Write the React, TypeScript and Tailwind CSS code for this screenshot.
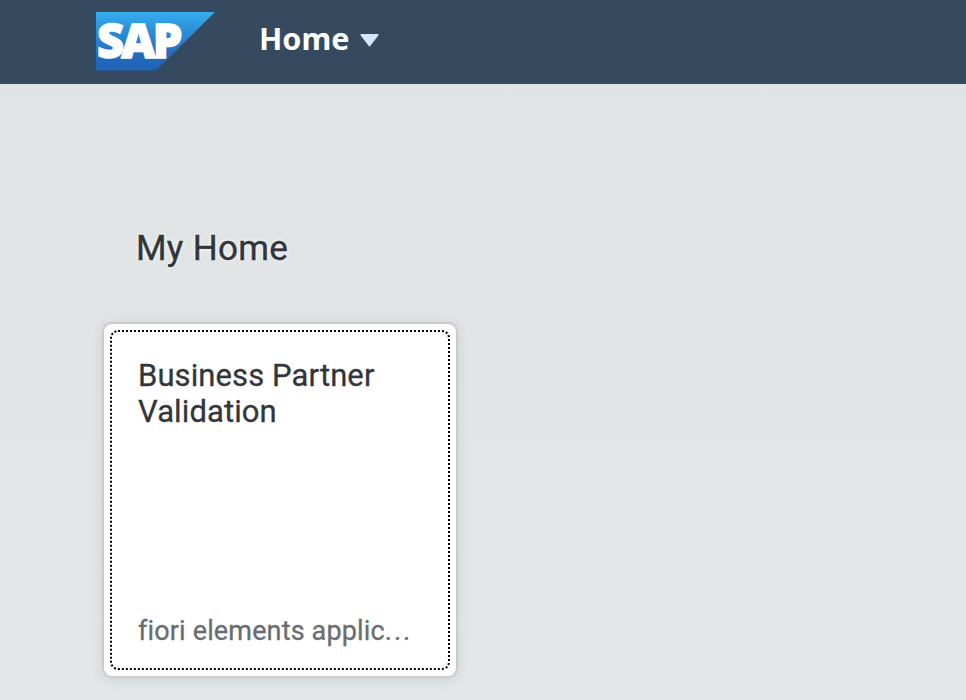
function SapLogo() {
  return (
    <svg width="119" height="59" viewBox="0 0 119 59" role="img" aria-label="SAP" className="overflow-visible">
      <defs>
        <linearGradient id="sap" x1="0" y1="0" x2="0" y2="1">
          <stop offset="0" stopColor="#35adee" />
          <stop offset="0.3" stopColor="#2b92da" />
          <stop offset="0.7" stopColor="#236fc0" />
          <stop offset="1" stopColor="#2060b3" />
        </linearGradient>
      </defs>
      <path d="M0 0H119L60 58.5H0Z" fill="url(#sap)" />
      <text
        x="0.9"
        y="46.1"
        fill="#fff"
        stroke="#fff"
        strokeWidth="1.4"
        fontFamily="'Open Sans', 'Noto Sans', sans-serif"
        fontWeight="800"
        fontSize="47"
        letterSpacing="-2.7"
      >
        SAP
      </text>
    </svg>
  );
}

export default function App() {
  return (
    <div className="flex h-[700px] w-[966px] flex-col overflow-hidden bg-linear-to-b from-[#dfe3e4] to-[#e4e7e8] font-[Roboto,sans-serif]">
      <header className="flex h-[84px] shrink-0 bg-[#354a5f] pl-24">
        <div className="pt-3">
          <SapLogo />
        </div>
        <button className="ml-[44px] flex h-[80px] items-center text-white">
          <span className="w-[101px] pb-[3px] text-left font-['Noto_Sans',sans-serif] text-[30.5px] leading-none font-bold">Home</span>
          <svg width="19" height="13" viewBox="0 0 19 13" fill="#d1e8ff">
            <path d="M1 0H18Q19 .5 18.3 1.5L10.2 12Q9.5 12.8 8.8 12L.7 1.5Q0 .5 1 0Z" />
          </svg>
        </button>
      </header>
      <main className="flex flex-col items-start">
        <h1 className="mt-[144px] ml-[136px] text-[35px] leading-[42px] tracking-[0.3px] text-[#32363a] [-webkit-text-stroke:0.4px_#32363a] [text-shadow:0_0_4px_white]">
          My Home
        </h1>
        <article className="mt-[52px] ml-[102px] flex h-[356px] w-[356px] rounded-[10px] border-2 border-[#c9cccd] bg-white p-[6px] shadow-[0_2px_12px_rgba(70,80,85,0.14)]">
          <div className="flex flex-1 flex-col justify-between rounded-[8px] border-2 border-dotted border-black px-[26px] pt-[26px] pb-[19px]">
            <h2 className="text-[31px] leading-9 tracking-[0.1px] text-[#32363a] [-webkit-text-stroke:0.3px_#32363a]">
              Business Partner
              <br />
              Validation
            </h2>
            <p className="text-[27px] leading-9 tracking-[0.15px] whitespace-nowrap text-[#6a6d70] [-webkit-text-stroke:0.3px_#6a6d70]">
              fiori elements applic<span className="tracking-[2px]">...</span>
            </p>
          </div>
        </article>
      </main>
    </div>
  );
}
